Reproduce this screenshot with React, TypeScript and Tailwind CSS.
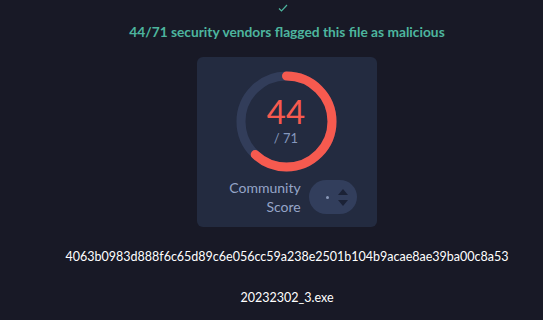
import React from "react";

const pct = 44 / 71;
const r = 45.5;
const circ = 2 * Math.PI * r;

const ScoreRing = () => (
  <div className="relative h-[101px] w-[101px]">
    <svg width="101" height="101" viewBox="0 0 101 101" className="absolute inset-0">
      <circle cx="50.5" cy="50.5" r={r} fill="none" stroke="#323d5a" strokeWidth="9" />
      <circle
        cx="50.5"
        cy="50.5"
        r={r}
        fill="none"
        stroke="#f65a4f"
        strokeWidth="9"
        strokeLinecap="round"
        strokeDasharray={`${circ * pct} ${circ}`}
        transform="rotate(-90 50.5 50.5)"
      />
    </svg>
    <div className="absolute inset-0 flex flex-col items-center justify-center">
      <span className="mt-[-4px] text-[33px] leading-[34px] font-normal text-[#f65a4f]">44</span>
      <span className="mt-[3px] text-[13px] leading-[14px] text-[#8597bd]">/ 71</span>
    </div>
  </div>
);

export default function App() {
  return (
    <div
      className="flex h-[320px] w-full flex-col items-center bg-[#181926] pl-[31px] text-white"
      style={{ fontFamily: "Lato, 'Noto Sans', sans-serif" }}
    >
      <svg width="10" height="8" viewBox="0 0 10 8" className="mt-[4px] ml-[-8px]">
        <path d="M1 4.5 L3.5 7 L9 1" fill="none" stroke="#4db59e" strokeWidth="1.2" />
      </svg>
      <h1 className="mt-[11px] text-[13.75px] leading-[18px] font-bold text-[#4db59e]">
        44/71 security vendors flagged this file as malicious
      </h1>
      <div className="mt-[16px] flex h-[170px] w-[180px] flex-col items-center rounded-[6px] bg-[#232b40] pt-[14px]">
        <div className="ml-[-2px]">
          <ScoreRing />
        </div>
        <div className="mt-[6px] flex items-center gap-[8px] pl-[12px]">
          <div className="text-right text-[14px] leading-[19px] text-[#96a5c8]">
            <div>Community</div>
            <div>Score</div>
          </div>
          <div className="flex h-[34px] w-[48px] items-center justify-between rounded-full bg-[#323e5c] pr-[9px] pl-[17px]">
            <span className="h-[3px] w-[3px] rounded-full bg-[#8a99b8]" />
            <div className="flex flex-col items-center gap-[5px]">
              <svg width="10" height="6" viewBox="0 0 10 6">
                <path d="M0 6 L5 0 L10 6 Z" fill="#1b2236" />
              </svg>
              <svg width="10" height="6" viewBox="0 0 10 6">
                <path d="M0 0 L5 6 L10 0 Z" fill="#1b2236" />
              </svg>
            </div>
          </div>
        </div>
      </div>
      <div className="mt-[21px] text-[12.5px] leading-[18px] text-white">
        4063b0983d888f6c65d89c6e056cc59a238e2501b104b9acae8ae39ba00c8a53
      </div>
      <div className="mt-[23px] text-[12.5px] leading-[18px] text-white">20232302_3.exe</div>
    </div>
  );
}
